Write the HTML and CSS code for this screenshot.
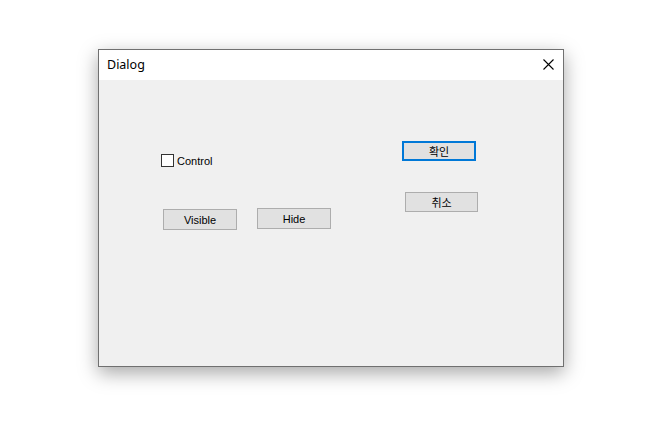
FILE: index.html
```html
<!DOCTYPE html>
<html lang="ko">

<head>
    <meta charset="UTF-8">
    <title>Dialog</title>
    <link rel="stylesheet" href="styles.css">
</head>

<body>
    <div class="dialog">
        <div class="title_bar">
            <span class="title">Dialog</span>
            <span class="close_btn">
                <svg width="11" height="11" viewBox="0 0 11 11">
                    <path d="M0.5 0.5 L10.5 10.5 M10.5 0.5 L0.5 10.5" stroke="#000" stroke-width="1.1" fill="none" />
                </svg>
            </span>
        </div>
        <div class="client">
            <div class="left_col">
                <label class="check_row">
                    <span class="check_box"></span>
                    <span class="check_label">Control</span>
                </label>
                <div class="button_row">
                    <button class="win_button visible_btn">Visible</button>
                    <button class="win_button hide_btn">Hide</button>
                </div>
            </div>
            <div class="right_col">
                <button class="win_button default_btn">확인</button>
                <button class="win_button cancel_btn">취소</button>
            </div>
        </div>
    </div>
</body>

</html>
```

FILE: styles.css
```css
html,
body {
    height: 100%;
}

body {
    margin: 0;
    box-sizing: border-box;
    padding: 49px 0 0 98px;
    background-color: #fff;
    font-family: "Noto Sans", "Noto Sans CJK KR", sans-serif;
}

.dialog {
    width: 464px;
    height: 316px;
    border: 1px solid #707070;
    background-color: #f0f0f0;
    box-shadow: 0 6px 18px rgba(0, 0, 0, 0.35);
    display: flex;
    flex-direction: column;
}

.title_bar {
    height: 30px;
    background-color: #fff;
    display: flex;
    align-items: center;
    justify-content: space-between;
    padding: 0 9px 0 8px;
}

.title {
    font-size: 12.5px;
    color: #000;
    margin-top: -1px;
}

.close_btn {
    display: flex;
    margin-top: -1px;
}

.client {
    display: flex;
    padding: 61px 0 0 62px;
}

.left_col {
    width: 241px;
    padding-top: 13px;
}

.check_row {
    display: flex;
    align-items: center;
    height: 13px;
}

.check_box {
    width: 11px;
    height: 11px;
    border: 1px solid #333;
    background-color: #fff;
}

.check_label {
    font-family: "Liberation Sans", "Noto Sans CJK KR", sans-serif;
    font-size: 11px;
    margin-left: 3px;
    margin-top: 1px;
    color: #000;
}

.button_row {
    display: flex;
    align-items: flex-start;
    margin-top: 41px;
}

.win_button {
    box-sizing: border-box;
    width: 74px;
    height: 21px;
    padding: 0;
    background-color: #e1e1e1;
    border: 1px solid #adadad;
    font-family: "Liberation Sans", "Noto Sans CJK KR", sans-serif;
    font-size: 11px;
    color: #000;
}

.visible_btn {
    margin: 1px 0 0 2px;
}

.hide_btn {
    margin-left: 20px;
}

.right_col {
    display: flex;
    flex-direction: column;
    align-items: flex-start;
}

.default_btn,
.cancel_btn {
    height: 20px;
    font-family: "Noto Sans CJK KR", sans-serif;
    font-size: 11px;
}

.default_btn {
    border: 2px solid #0078d7;
}

.cancel_btn {
    width: 73px;
    margin: 31px 0 0 3px;
}
```
